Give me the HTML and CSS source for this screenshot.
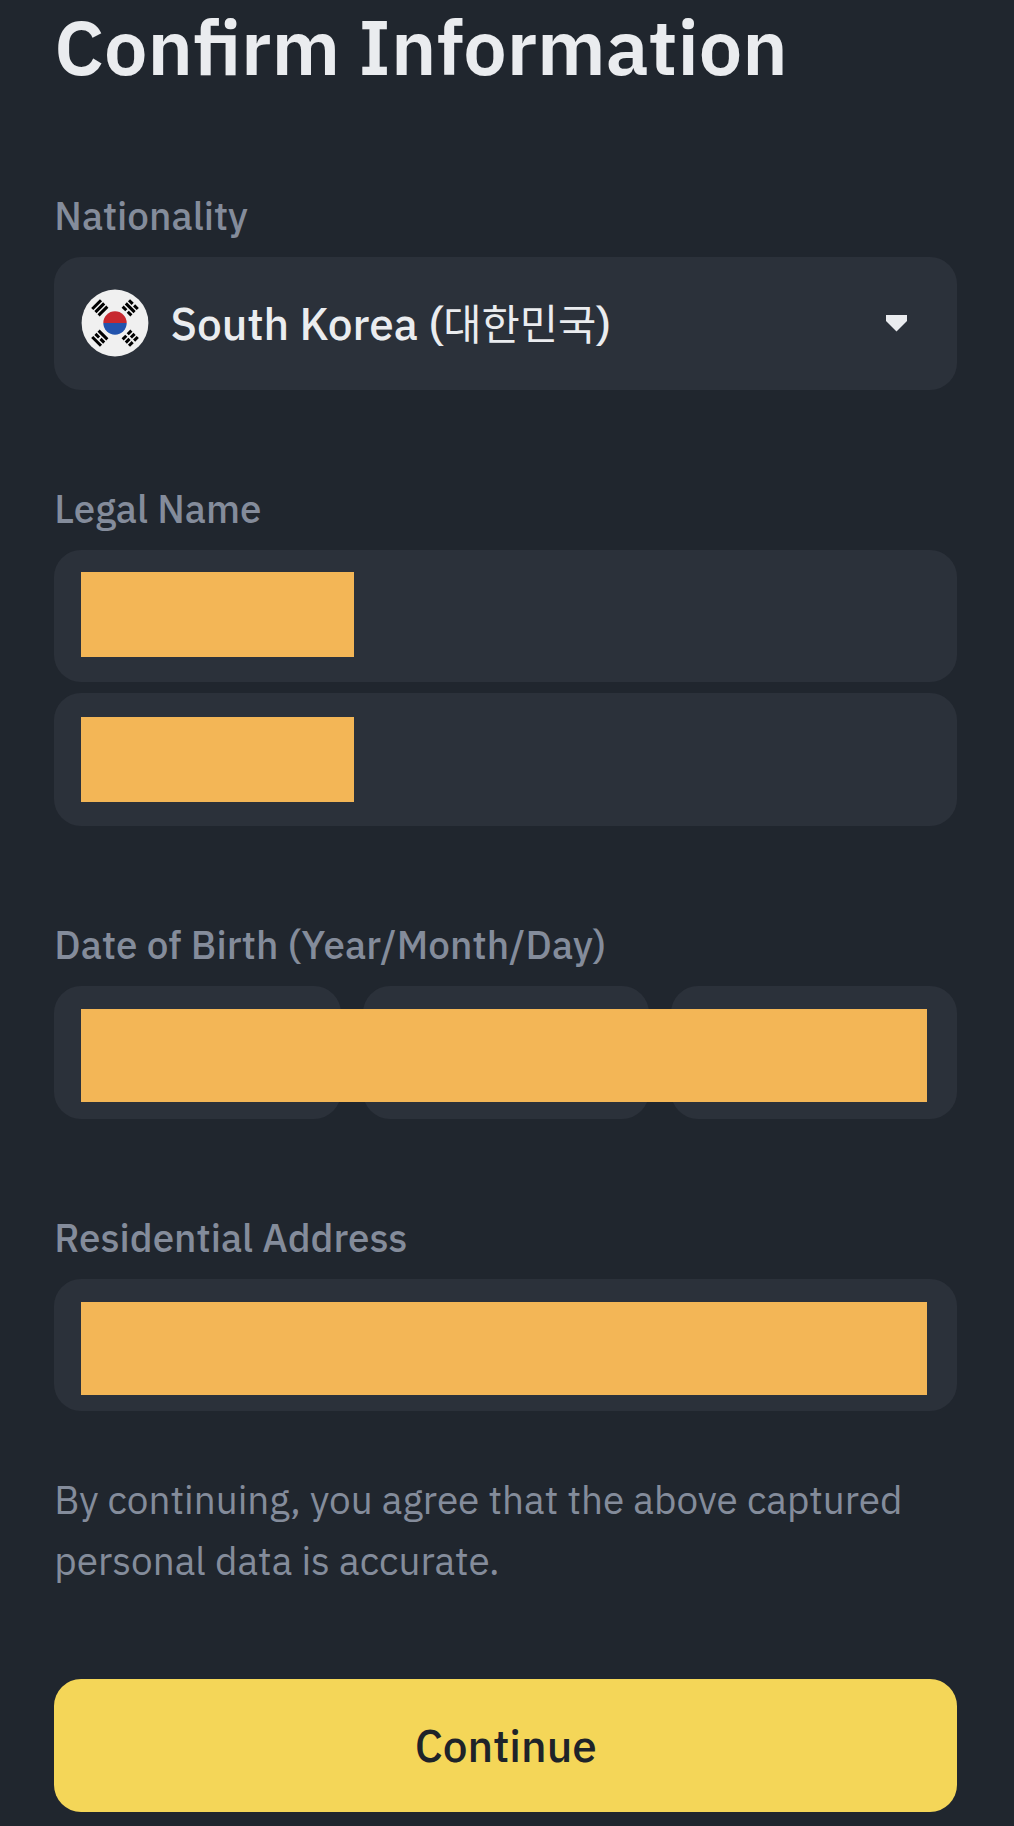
FILE: index.html
```
<!DOCTYPE html>
<html lang="en">
<head>
<meta charset="utf-8">
<title>Confirm Information</title>
<link rel="stylesheet" href="styles.css">
</head>
<body>
<main class="page">
  <h1 class="title">Confirm Information</h1>

  <section class="group">
    <div class="label">Nationality</div>
    <div class="field select">
      <svg class="flag" viewBox="-34 -34 68 68" aria-hidden="true">
        <circle r="33.4" fill="#f0f0f0"/>
        <path d="M-11.7 0a11.7 11.7 0 0 1 23.4 0z" fill="#c7282f"/>
        <path d="M-11.7 0a11.7 11.7 0 0 0 23.4 0z" fill="#2253ad"/>
        <g fill="none" stroke="#000" stroke-width="3">
          <g transform="rotate(45)">
            <path d="M-26 -6.2v12.4M-21.5 -6.2v12.4M-17 -6.2v12.4"/>
            <path d="M26 -6.2v5.2M26 1v5.2M21.5 -6.2v5.2M21.5 1v5.2M17 -6.2v5.2M17 1v5.2"/>
          </g>
          <g transform="rotate(-45)">
            <path d="M-26 -6.2v12.4M-21.5 -6.2v5.2M-21.5 1v5.2M-17 -6.2v12.4"/>
            <path d="M26 -6.2v5.2M26 1v5.2M21.5 -6.2v12.4M17 -6.2v5.2M17 1v5.2"/>
          </g>
        </g>
      </svg>
      <span class="country">South Korea (<span lang="ko">대한민국</span>)</span>
      <svg class="caret" viewBox="0 0 21 17" aria-hidden="true"><path d="M0 0h21v6L10.5 16.6 0 6z" fill="#eaecef"/></svg>
    </div>
  </section>

  <section class="group">
    <div class="label">Legal Name</div>
    <div class="field name"><div class="mask"></div></div>
    <div class="field name second"><div class="mask"></div></div>
  </section>

  <section class="group">
    <div class="label birth">Date of Birth (Year/Month/Day)</div>
    <div class="dates">
      <div class="field"></div>
      <div class="field"></div>
      <div class="field"></div>
      <div class="mask date-mask"></div>
    </div>
  </section>

  <section class="group">
    <div class="label">Residential Address</div>
    <div class="field address"><div class="mask"></div></div>
  </section>

  <p class="note">By continuing, you agree that the above captured personal data is accurate.</p>
  <button class="continue" type="button">Continue</button>
</main>
</body>
</html>
```
FILE: styles.css
```
* { box-sizing: border-box; }

body {
  margin: 0;
  background: #20262e;
  color: #eaecef;
  font-family: "IBM Plex Sans", "Noto Sans", "Noto Sans CJK KR", sans-serif;
}

.page {
  height: 1826px;
  padding: 0 56.7px 0 54.3px;
}

.title {
  margin: 0 0 93px;
  font-size: 77.3px;
  font-weight: 600;
  line-height: 92.6px;
  white-space: nowrap;
}

.group { margin-bottom: 88.7px; }

.label {
  margin-bottom: 10.9px;
  padding-top: .6px;
  color: #848c9b;
  font-size: 38.65px;
  font-weight: 500;
  line-height: 60px;
  white-space: nowrap;
}

.birth { letter-spacing: .1px; }

.field {
  height: 132.6px;
  border-radius: 27px;
  background: #2b313a;
}

.mask { background: #f3b656; }

.select {
  display: flex;
  align-items: center;
  padding: 0 50.2px 0 26.7px;
}

.flag {
  width: 68px;
  height: 68px;
}

.country {
  margin-left: 21.5px;
  padding-top: 2px;
  font-size: 44.2px;
  font-weight: 500;
  line-height: 60px;
  white-space: nowrap;
}

.country span {
  font-family: "Noto Sans CJK KR", sans-serif;
  font-size: 41.6px;
  font-weight: 400;
  line-height: 1;
}

.caret {
  width: 21px;
  height: 17px;
  margin-left: auto;
}

.name { padding: 22px 26.7px; }

.name .mask {
  width: 273px;
  height: 85px;
}

.second {
  margin-top: 10.9px;
  padding-top: 23.5px;
}

.dates {
  position: relative;
  display: grid;
  grid-template-columns: repeat(3, 1fr);
  gap: 22px;
}

/* Covers all three date parts with one strip */
.date-mask {
  position: absolute;
  top: 23px;
  left: 26.7px;
  width: 846px;
  height: 93px;
}

.address { padding: 23px 26.7px; }

.address .mask {
  width: 846px;
  height: 93px;
}

.note {
  margin: -30px 0 87.9px;
  color: #848c9b;
  font-size: 38.7px;
  line-height: 60.5px;
}

.continue {
  display: block;
  width: 100%;
  height: 132.6px;
  padding: 1px 0 0;
  border: 0;
  border-radius: 27px;
  background: #f4d658;
  color: #1e2329;
  font-family: inherit;
  font-size: 44.2px;
  font-weight: 500;
}
```
